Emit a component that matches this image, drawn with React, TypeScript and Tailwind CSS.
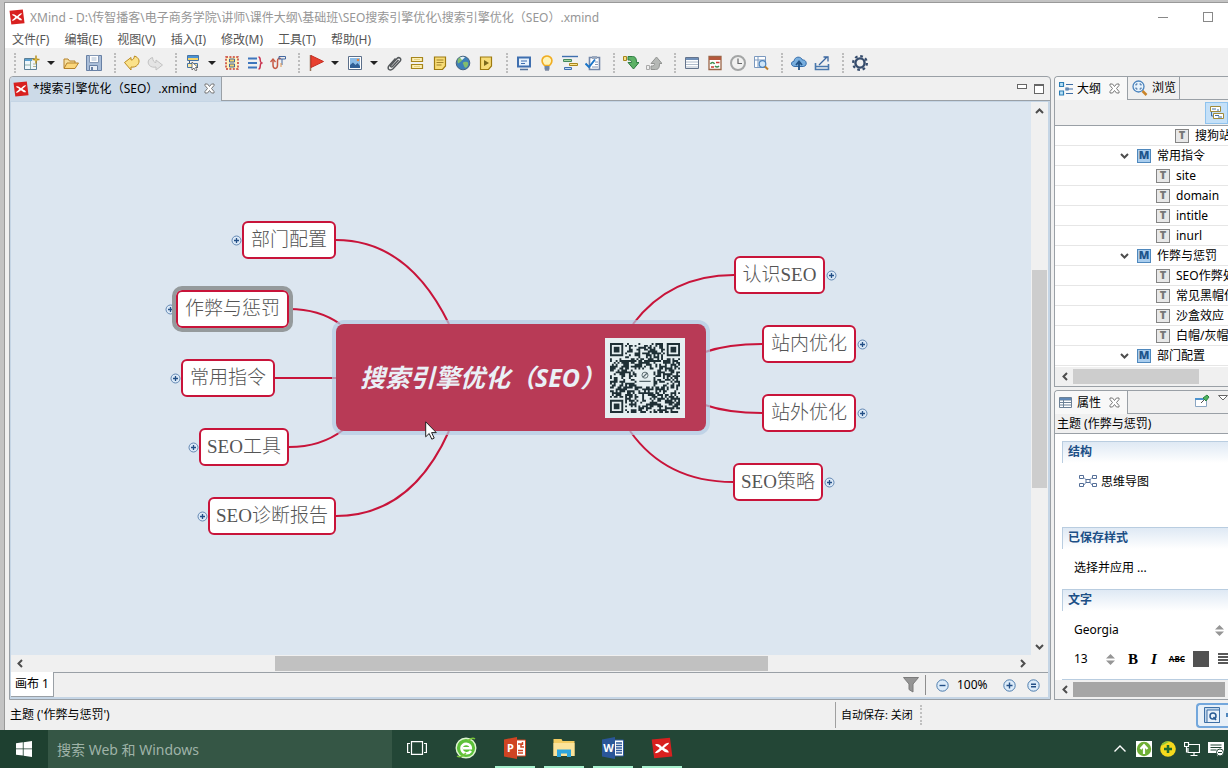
import type { ReactNode } from "react";

const menus = ["文件(F)", "编辑(E)", "视图(V)", "插入(I)", "修改(M)", "工具(T)", "帮助(H)"];

const topics = [
  { text: "部门配置", box: "left-[231px] top-[119px] w-[94px]", plus: "left-[220px] top-[133px]" },
  { text: "作弊与惩罚", box: "left-[165px] top-[188px] w-[113px] outline-4 outline-[#959a9c]", plus: "left-[154px] top-[202px]" },
  { text: "常用指令", box: "left-[170px] top-[257px] w-[94px]", plus: "left-[159px] top-[271px]" },
  { text: "SEO工具", box: "left-[188px] top-[326px] w-[90px]", plus: "left-[177px] top-[340px]" },
  { text: "SEO诊断报告", box: "left-[197px] top-[395px] w-[128px]", plus: "left-[186px] top-[409px]" },
  { text: "认识SEO", box: "left-[723px] top-[154px] w-[91px]", plus: "left-[815px] top-[168px]" },
  { text: "站内优化", box: "left-[751px] top-[223px] w-[94px]", plus: "left-[846px] top-[237px]" },
  { text: "站外优化", box: "left-[751px] top-[292px] w-[94px]", plus: "left-[846px] top-[306px]" },
  { text: "SEO策略", box: "left-[722px] top-[361px] w-[90px]", plus: "left-[813px] top-[375px]" },
];

const links = [
  "M325 138Q397 138 438 222",
  "M278 207Q308 207 329 222",
  "M264 276H326",
  "M278 345Q310 345 332 328",
  "M325 414Q400 414 438 329",
  "M723 173Q659 173 622 222",
  "M751 242Q717 242 694 250",
  "M751 311Q717 311 694 303",
  "M722 380Q655 380 619 329",
];

const outline = [
  { kind: "T", text: "搜狗站长平台", pad: "pl-[117px]" },
  { kind: "M", text: "常用指令", pad: "pl-[63px]" },
  { kind: "T", text: "site", pad: "pl-[98px]" },
  { kind: "T", text: "domain", pad: "pl-[98px]" },
  { kind: "T", text: "intitle", pad: "pl-[98px]" },
  { kind: "T", text: "inurl", pad: "pl-[98px]" },
  { kind: "M", text: "作弊与惩罚", pad: "pl-[63px]" },
  { kind: "T", text: "SEO作弊处罚", pad: "pl-[98px]" },
  { kind: "T", text: "常见黑帽作弊", pad: "pl-[98px]" },
  { kind: "T", text: "沙盒效应", pad: "pl-[98px]" },
  { kind: "T", text: "白帽/灰帽/黑帽", pad: "pl-[98px]" },
  { kind: "M", text: "部门配置", pad: "pl-[63px]" },
];

function Svg({ children, className = "size-4", box = "0 0 16 16" }: { children: ReactNode; className?: string; box?: string }) {
  return (
    <svg viewBox={box} className={`${className} shrink-0`} fill="none" aria-hidden="true">
      {children}
    </svg>
  );
}

// Toolbar drawings, all on a 16x16 grid
const icons: Record<string, ReactNode> = {
  newMap: (
    <>
      <path d="M.5 3.500h12v11H.5z" fill="#eef6fb" stroke="#5b7f95" />
      <path d="M1 4h7v2H1z" fill="#5ba0d0" />
      <path d="M6.500 6v8M1 10h5" stroke="#8fb0a8" />
      <path d="M9 9h3M9 11.500h3" stroke="#b6b48a" />
      <path d="M12 .5v8M8.500 4.500h7" stroke="#b8901c" strokeWidth="1.500" />
      <path d="M10.500 3l3 3m0-3l-3 3" stroke="#e4c34e" />
    </>
  ),
  open: (
    <>
      <path d="M1 13V4h4l1.500 2H12v2" fill="#f6dfa0" stroke="#b5822b" />
      <path d="M1 13.500L4 8h11.500L12 13.500z" fill="#fbd77c" stroke="#b5822b" />
    </>
  ),
  save: (
    <>
      <path d="M.5.500h15v15H.5z" fill="#a9bdd8" stroke="#6881a5" />
      <path d="M3.500.500h9v7h-9z" fill="#fff" stroke="#8498b5" />
      <path d="M5.500 3h5M5.500 5h5" stroke="#a8bad0" />
      <path d="M3.500 10.500h8v5h-8z" fill="#e8eef6" stroke="#6881a5" />
      <path d="M5 12h2v3H5z" fill="#6881a5" />
    </>
  ),
  undo: <path d="M.5 7.500L7 2.500V5c2 0 3-1 3.500-4 4.500 1.500 6 5.500 3 9-1.500 1.700-4 2.500-6.500 2v3z" fill="#fbe28a" stroke="#bb8b20" strokeLinejoin="round" />,
  redo: <path d="M15.500 10L9 5v2.500C7 7.500 6 6 5.500 2.500 1 4 0 7.500 2.500 10.500c1.500 1.500 4 2 6.500 1.500v3z" fill="#e4e4e4" stroke="#c2c2c2" strokeLinejoin="round" />,
  topic: (
    <>
      <path d="M2.500.500h11v5h-11z" fill="#f6d56a" stroke="#4674a6" />
      <path d="M3 1h10v2H3z" fill="#4c92d4" />
      <path d="M4.500 6v3" stroke="#555" />
      <path d="M2.500 8.500h10v4h-10z" fill="#fbe9a5" stroke="#4674a6" />
      <path d="M7 7v8l2-2 1.500 3 1.500-1-1.500-2.500H13z" fill="#fff" stroke="#555" strokeWidth=".8" />
    </>
  ),
  boundary: (
    <>
      <path d="M2 2h12v12H2z" fill="#fff3c0" stroke="#c63b2f" strokeWidth="1.500" strokeDasharray="2 1.400" />
      <path d="M5.500 4h5v3h-5zM5.500 9h5v3h-5z" fill="#f6d56a" stroke="#4468a0" />
    </>
  ),
  summary: (
    <>
      <path d="M1 3.500h9M1 8h9M1 12.500h9" stroke="#3e76bd" strokeWidth="2" />
      <path d="M11.500 2c3 0 .5 5 3 6-2.500 1 0 6-3 6" stroke="#c9324e" strokeWidth="1.500" />
    </>
  ),
  relation: (
    <>
      <path d="M3 5v5c0 4.500 4.500 4.500 4.500 0V6c0-3 2.500-3.500 3-2" stroke="#c65a45" strokeWidth="1.500" />
      <path d="M.5 7l2.500-3 2.500 3" stroke="#c65a45" strokeWidth="1.300" />
      <path d="M9 1.500h6.500v2.500H9zM12 4v6" stroke="#4468a0" />
      <path d="M11 8v4" stroke="#e0954e" />
    </>
  ),
  flag: (
    <>
      <path d="M2.500 0v16" stroke="#97755a" strokeWidth="1.500" />
      <path d="M3 .5l12.500 6L3 12.500z" fill="#e8402f" stroke="#c52d22" />
    </>
  ),
  image: (
    <>
      <path d="M1.500 1.500h13v13h-13z" fill="#fff" stroke="#5b6f8a" />
      <path d="M3 3h10v10H3z" fill="#8bbbe6" />
      <path d="M3 13v-3l3-2.500 2.500 2.500 2-2 2.500 3v2z" fill="#315f96" />
      <circle cx="11" cy="5" r="1.300" fill="#e8843a" />
    </>
  ),
  clip: <path d="M12.500 5L6.500 11.500c-1.200 1.200-2.500 0-1.500-1.200L11 3.500c2-2 5 .2 3.200 2.500L7 13.800c-3 2.800-6.500 0-4-3L9.500 3.500" stroke="#55595c" strokeWidth="1.500" />,
  label: (
    <>
      <path d="M2.500 2.500h11v4h-11zM2.500 9.500h11v4h-11z" fill="#fdf0b5" stroke="#a7861c" strokeWidth="1.200" />
      <path d="M5 4.500h6M5 11.500h6" stroke="#e5d283" />
    </>
  ),
  note: (
    <>
      <path d="M2.500 2h11v9l-3 3.500h-8z" fill="#f7dc77" stroke="#9e7b10" strokeWidth="1.200" />
      <path d="M4.500 5h7M4.500 7.500h7M4.500 10h5" stroke="#a2832a" />
    </>
  ),
  globe: (
    <>
      <circle cx="8" cy="8" r="6.800" fill="#3d7fb8" stroke="#47627e" />
      <path d="M3 4c3-3 6-2 5 0S5 7 4 8 2 7 3 4zM9 7c3-1 5 0 4 3s-3 4-4 1-2-3 0-4z" fill="#83bd6d" />
      <path d="M5 2.500c2-1 4-1 5 0L7 5z" fill="#e4f3fa" />
    </>
  ),
  audio: (
    <>
      <path d="M2.500 2h11v9l-3 3.500h-8z" fill="#f7dc77" stroke="#9e7b10" strokeWidth="1.200" />
      <path d="M6 5l5 3-5 3z" fill="#7c6a1c" />
    </>
  ),
  present: (
    <>
      <path d="M2 2.500h12v9H2z" fill="#e7f2fc" stroke="#3f6faf" strokeWidth="2" />
      <path d="M5 6h6M5 8.500h4" stroke="#3f6faf" />
      <path d="M4 14.500h8" stroke="#56749c" strokeWidth="1.500" />
    </>
  ),
  bulb: (
    <>
      <path d="M5.500 10.500C1 6 3.500 1 8 1s7 5 2.500 9.500z" fill="#fff4b8" stroke="#f0ad22" strokeWidth="1.600" />
      <path d="M5.500 11h5v3.500h-5z" fill="#6f86a6" />
      <path d="M6 15h4" stroke="#45597a" />
    </>
  ),
  gantt: (
    <>
      <path d="M0 1.500h16" stroke="#3f6faf" strokeWidth="1.400" />
      <path d="M1.500 4.500h8v2h-8z" fill="#a5d6a0" stroke="#44885e" />
      <path d="M7.500 8.500h8v2h-8z" fill="#fbe28a" stroke="#a7861c" />
      <path d="M2.500 12.500h7v2h-7z" fill="#bcd7f2" stroke="#3f6faf" />
    </>
  ),
  task: (
    <>
      <path d="M4.500 2.500h10v12h-10z" fill="#fff" stroke="#7286a8" strokeWidth="1.600" />
      <path d="M7 1h5v3H7z" fill="#9aa8bd" />
      <path d="M10 7h3M10 9.500h3M7 12h6" stroke="#8496b5" />
      <path d="M.5 8.500L4 12l6-7.500" stroke="#1c75c8" strokeWidth="2" />
    </>
  ),
  drillIn: (
    <>
      <path d="M.5 1.500h3v4h-3z" fill="#fbe28a" stroke="#a7861c" />
      <path d="M5 1.500h4.500c3 0 4 2 4 6H16L10.500 14 5 7.500h3.500c0-2-.5-2.500-3.500-2.500z" fill="#5cb165" stroke="#2d7c41" />
    </>
  ),
  drillOut: (
    <>
      <path d="M.5 10.500h3v4h-3z" fill="#eee" stroke="#aaa" />
      <path d="M5 14.500h4.500c3 0 4-2 4-6H16L10.500 2 5 8.500h3.500c0 2-.5 2.500-3.500 2.500z" fill="#b5b8b5" stroke="#929492" />
    </>
  ),
  list: (
    <>
      <path d="M1.500 2.500h13v11h-13z" fill="#fff" stroke="#64748c" />
      <path d="M2 4h12" stroke="#6f8fb8" strokeWidth="2" />
      <path d="M2 7h12M2 9.500h12M2 12h12" stroke="#b0bccb" />
    </>
  ),
  theme: (
    <>
      <path d="M2 1.500h12v13H2z" fill="#fff" stroke="#9a6648" strokeWidth="1.300" />
      <path d="M2 2h12v3H2z" fill="#b5583c" />
      <path d="M3.500 9c1-2 3-2 4 0M8 11c2 2 3 1 4 0" stroke="#3d8e50" strokeWidth="1.600" />
      <path d="M9 7.500h3.500M4 12h3" stroke="#c63b2f" strokeWidth="1.600" />
    </>
  ),
  clock: (
    <>
      <circle cx="8" cy="8" r="7" fill="#f1f1f0" stroke="#a3a5a5" strokeWidth="2" />
      <path d="M8 3.500V9M8 8.500h4" stroke="#66686a" strokeWidth="1.200" />
    </>
  ),
  find: (
    <>
      <path d="M1.500 1.500h11v11h-11zM1.500 5h11M5 1.500v11" fill="#fff" stroke="#7b99bf" />
      <circle cx="9.500" cy="9" r="3.300" fill="#cfe6f8" stroke="#4a83bd" strokeWidth="1.200" />
      <path d="M12 11.500l3 3" stroke="#bd7f2c" strokeWidth="2" />
    </>
  ),
  cloud: (
    <>
      <path d="M4 11.500c-4.500 0-4.500-5-1-5.200C3.500 1 10 1 11.500 5c4.500-.5 5 6 1 6.500z" fill="#78aede" stroke="#326ba9" />
      <path d="M8 15V8M5 10l3-3.500 3 3.500" stroke="#235487" strokeWidth="1.800" />
    </>
  ),
  share: (
    <>
      <path d="M1.500 8v6.500h13V9M1.500 11.500h13" stroke="#4a78ad" strokeWidth="1.600" />
      <path d="M5 10l8-8M9.500 2H14v4.500" stroke="#3b67a0" strokeWidth="1.300" />
    </>
  ),
  gear: (
    <>
      <circle cx="8" cy="8" r="4.600" stroke="#364c6c" strokeWidth="2.400" />
      <circle cx="8" cy="8" r="6.900" stroke="#364c6c" strokeWidth="2.200" strokeDasharray="2.700 2.720" />
    </>
  ),
};

const toolbar = [
  ["newMap", "caret", "open", "save"],
  ["undo", "redo"],
  ["topic", "caret", "boundary", "summary", "relation"],
  ["flag", "caret", "image", "caret", "clip", "label", "note", "globe", "audio"],
  ["present", "bulb", "gantt", "task"],
  ["drillIn", "drillOut"],
  ["list", "theme", "clock", "find"],
  ["cloud", "share"],
  ["gear"],
];

function Logo({ className = "size-4" }: { className?: string }) {
  return (
    <Svg className={className}>
      <path d="M.5 1.800L13.800.5l1.700 13.700L2.300 15.500z" fill="#d8201f" />
      <path d="M3 5.500c2-1 3.500.3 5 1.700C9.500 5.800 11 4 13 4.300c.2 1-2.500 2.300-3.500 3.700 1.300 1 3.300 1.500 3.500 3.200-2.500.5-3.500-1-5-2-1.500 1-2.700 2.800-5 2.500C3 10.500 5.500 9.500 6.300 8 5.200 7 3.300 6.800 3 5.500z" fill="#fff" />
    </Svg>
  );
}

// Full-width brackets are centred in their cell only in the TC face
function Seo() {
  return (
    <>
      <span className="font-['Noto_Sans_CJK_TC',sans-serif]">（</span>
      SEO
      <span className="font-['Noto_Sans_CJK_TC',sans-serif]">）</span>
    </>
  );
}

function CloseX() {
  return (
    <Svg className="size-[11px]" box="0 0 11 11">
      <path d="M1 1h2.500l2 2.500L7.500 1H10v1.500L7.500 5.500 10 8.500V10H7.500l-2-2.500L3.500 10H1V8.500l2.500-3L1 2.500z" stroke="#777" fill="#fff" />
    </Svg>
  );
}

function Arrow({ d }: { d: string }) {
  return (
    <Svg className="size-[9px]" box="0 0 9 9">
      <path d={d} stroke="#4d4d4d" strokeWidth="2" />
    </Svg>
  );
}

const LEFT = "M6 1L2.500 4.500 6 8";
const RIGHT = "M3 1l3.500 3.500L3 8";
const UP = "M1 6l3.500-3.500L8 6";
const DOWN = "M1 3l3.500 3.500L8 3";

function Round({ d }: { d: string }) {
  return (
    <Svg className="size-[13px]" box="0 0 13 13">
      <circle cx="6.500" cy="6.500" r="5.700" fill="#dcebf9" stroke="#4d7cad" />
      <path d={d} stroke="#234f86" strokeWidth="1.400" />
    </Svg>
  );
}

// Deterministic module pattern around the three finder squares
const SIZE = 37;
function buildModules() {
  let seed = 20167;
  let d = "";
  for (let y = 0; y < SIZE; y++) {
    for (let x = 0; x < SIZE; x++) {
      seed = (seed * 16807) % 2147483647;
      const inFinder = (x < 8 && y < 8) || (x > 28 && y < 8) || (x < 8 && y > 28);
      const inLogo = x > 13 && x < 23 && y > 13 && y < 23;
      if (!inFinder && !inLogo && seed / 2147483647 > 0.46) d += `M${x} ${y}h1v1h-1z`;
    }
  }
  return d;
}
const modules = buildModules();

function QrCode() {
  return (
    <div className="bg-[#e6eff1] p-[5px]">
      <svg viewBox="0 0 37 37" className="size-[70px]" role="img" aria-label="QR">
        <path d={modules} fill="#1f3036" />
        {["translate(0 0)", "translate(30 0)", "translate(0 30)"].map((t) => (
          <g key={t} transform={t}>
            <path d="M.5.500h6v6h-6z" fill="none" stroke="#1f3036" />
            <path d="M2 2h3v3H2z" fill="#1f3036" />
          </g>
        ))}
        <circle cx="18.500" cy="17" r="1.600" fill="none" stroke="#59696e" strokeWidth=".5" />
        <path d="M17.500 18l2-2M15.500 20.300h6" stroke="#59696e" strokeWidth=".6" />
      </svg>
    </div>
  );
}

function Toolbar() {
  return (
    <div className="flex h-[28px] shrink-0 items-center bg-[#f0f0f0] pt-[2px]">
      {toolbar.map((group, i) => (
        <div key={i} className="flex items-center">
          <div className="flex w-[15px] justify-center pl-1">
            <div className="h-5 border-l-2 border-dotted border-[#bdbdbd]" />
          </div>
          {group.map((name, j) =>
            name === "caret" ? (
              <button key={j} aria-label="more" className="flex w-4 justify-center">
                <Svg className="h-1 w-2" box="0 0 8 4">
                  <path d="M0 0h8L4 4z" fill="#222" />
                </Svg>
              </button>
            ) : (
              <button key={j} aria-label={name} className="flex w-[23px] justify-center">
                <Svg>{icons[name]}</Svg>
              </button>
            ),
          )}
        </div>
      ))}
    </div>
  );
}

function MindMap() {
  return (
    <div className="relative min-w-0 flex-1 overflow-hidden bg-[#dce6f0]">
      <svg className="absolute inset-0 size-full" fill="none" stroke="#c8143a" strokeWidth="2">
        {links.map((d) => (
          <path key={d} d={d} />
        ))}
      </svg>
      <div className="absolute left-[325px] top-[222px] flex h-[107px] w-[370px] items-center rounded-lg bg-[#b83a56] pl-6 ring-4 ring-[#b4cbe2]/70">
        <span className="w-[245px] whitespace-nowrap text-[25px] font-bold italic text-[#eaf0f6]">
          搜索引擎优化
          <Seo />
        </span>
        <QrCode />
      </div>
      {topics.map((t) => (
        <div key={t.text}>
          <button aria-label="expand" className={`absolute ${t.plus}`}>
            <Svg className="size-[11px]" box="0 0 11 11">
              <circle cx="5.500" cy="5.500" r="4.500" fill="#dbe9f7" stroke="#6388b3" />
              <path d="M3 5.500h5M5.500 3v5" stroke="#234f86" strokeWidth="1.300" />
            </Svg>
          </button>
          <div
            className={`absolute flex h-[38px] items-center justify-center whitespace-nowrap rounded-md border-2 border-[#c8143a] bg-white font-['Liberation_Serif','Noto_Sans_CJK_SC',serif] text-[19px] font-light text-[#555] ${t.box}`}
          >
            {t.text}
          </div>
        </div>
      ))}
      <svg viewBox="0 0 12 19" className="absolute left-[414px] top-[319px] h-[19px] w-3">
        <path d="M.7.800v15l3.500-3.300 2.600 5.700 2.400-1.100-2.600-5.500h4.700z" fill="#fff" stroke="#222" />
      </svg>
    </div>
  );
}

function Editor() {
  return (
    <section className="flex min-w-0 flex-1 flex-col rounded-t border border-[#9aa0a6] bg-[#f0f0f0]">
      <div className="flex h-6 shrink-0 items-center border-b border-[#9aa0a6]">
        <div className="flex h-6 items-center gap-1 rounded-tl border-r border-[#9aa0a6] bg-[#ccdae8] pl-[3px] pr-[6px]">
          <Logo />
          <span className="whitespace-nowrap">
            *搜索引擎优化
            <Seo />
            .xmind
          </span>
          <button aria-label="关闭" className="ml-[3px]">
            <CloseX />
          </button>
        </div>
        <div className="ml-auto flex gap-[7px] pr-[6px]">
          <button aria-label="最小化" className="h-[5px] w-[10px] border border-[#666] bg-white" />
          <button aria-label="最大化" className="h-[10px] w-[10px] border border-t-2 border-[#666] bg-white" />
        </div>
      </div>
      <div className="flex min-h-0 flex-1 flex-col border-2 border-l border-t border-[#c5d5e5]">
        <div className="flex min-h-0 flex-1">
          <MindMap />
          <div className="flex w-[17px] flex-col items-center bg-[#f0f0f0]">
            <div className="flex h-[18px] items-center"><Arrow d={UP} /></div>
            <div className="flex-[150]" />
            <div className="w-[15px] flex-[218] bg-[#cdcdcd]" />
            <div className="flex-[149]" />
            <div className="flex h-[18px] items-center"><Arrow d={DOWN} /></div>
          </div>
        </div>
        <div className="flex h-[17px] shrink-0 items-center bg-[#f0f0f0] pr-[17px]">
          <div className="flex w-[18px] justify-center"><Arrow d={LEFT} /></div>
          <div className="flex-[246]" />
          <div className="h-[15px] flex-[493] bg-[#c1c1c1]" />
          <div className="flex-[245]" />
          <div className="flex w-[18px] justify-center"><Arrow d={RIGHT} /></div>
        </div>
        <div className="flex h-[25px] shrink-0 items-center bg-[#f0f0f0]">
          <button className="h-full whitespace-nowrap border-b border-r border-[#9aa0a6] bg-white px-1 text-[12px]">画布 1</button>
          <div className="flex h-full flex-1 items-center justify-end border-t border-[#9aa0a6] pr-2">
            <button aria-label="筛选" className="mr-[6px]">
              <Svg>
                <path d="M.5.500h15L10 7v8l-4-2.500V7z" fill="#959595" stroke="#7b7b7b" />
              </Svg>
            </button>
            <div className="mr-[10px] h-5 border-l border-[#8e8e8e]" />
            <button aria-label="缩小"><Round d="M3.500 6.500h6" /></button>
            <span className="w-[54px] pl-2">100%</span>
            <button aria-label="放大" className="mr-[11px]"><Round d="M3.500 6.500h6M6.500 3.500v6" /></button>
            <button aria-label="适应"><Round d="M4 5.300h5M4 7.800h5" /></button>
          </div>
        </div>
      </div>
    </section>
  );
}

function Outline() {
  return (
    <section className="flex flex-[311] flex-col overflow-hidden rounded-tl border border-r-0 border-[#9aa0a6] bg-[#f0f0f0]">
      <div className="flex h-[23px] shrink-0">
        <div className="flex w-[73px] items-center gap-1 border-r border-[#9aa0a6] bg-[#f8f8f8] pl-1">
          <Svg className="size-[14px]" box="0 0 14 14">
            <path d="M.5.500h4v4h-4zM.5 9h4v4h-4z" fill="#b9e1f7" stroke="#2b7db5" strokeWidth="1.200" />
            <path d="M7 2.500h7M9.500 7H14M7 11.500h7M7 6h2v2H7z" stroke="#3e6ea5" strokeWidth="1.200" />
          </Svg>
          <span>大纲</span>
          <button aria-label="关闭" className="ml-1"><CloseX /></button>
        </div>
        <button className="flex w-[52px] items-center gap-1 whitespace-nowrap border-b border-r border-[#9aa0a6] pl-1">
          <Svg>
            <circle cx="6.500" cy="6.500" r="5.500" fill="#e7f3fc" stroke="#4a83bd" strokeWidth="1.300" />
            <path d="M4 5.500V4h1.500M7.500 4H9v1.500M9 7.500V9H7.500M5.500 9H4V7.500" stroke="#35659e" />
            <path d="M10.500 11l4 4" stroke="#c98328" strokeWidth="2.500" />
          </Svg>
          浏览
        </button>
        <div className="flex-1 border-b border-[#9aa0a6]" />
      </div>
      <div className="flex h-[26px] shrink-0 items-center justify-end border-b border-[#9aa0a6]">
        <button aria-label="显示" className="flex h-[22px] w-[23px] items-center justify-center border border-[#8fc3ee] bg-[#c4e0f8]">
          <Svg>
            <path d="M1.500 1.500h10v5h-10zM4.500 8.500h10v5h-10z" fill="#fff" stroke="#a08a3a" />
            <path d="M3 4h4M8 5h2M6 10.500h4M9 12h4" stroke="#3e6ea5" />
            <path d="M2.500 7v4H4" stroke="#3e6ea5" />
          </Svg>
        </button>
      </div>
      <ul className="min-h-0 flex-1 overflow-hidden bg-white">
        {outline.map((row) => (
          <li key={row.kind + row.text} className={`flex h-5 items-center gap-[6px] whitespace-nowrap border-b border-[#e6e6e6] ${row.pad}`}>
            {row.kind === "M" && (
              <button aria-label="折叠" className="mr-px flex w-3 justify-center"><Arrow d={DOWN} /></button>
            )}
            {row.kind === "M" ? (
              <span className="flex size-[14px] shrink-0 items-center justify-center border border-[#4f88bd] bg-[#a9cdee] text-[11px] font-black text-[#1e548c]">M</span>
            ) : (
              <span className="ml-[3px] flex size-[14px] shrink-0 items-center justify-center border border-[#858585] bg-[#e8e8e8] text-[11px] font-black text-[#777]">T</span>
            )}
            <span>{row.text}</span>
          </li>
        ))}
      </ul>
      <div className="flex h-[19px] shrink-0 items-center gap-[2px] pl-1">
        <div className="flex w-3 justify-center"><Arrow d={LEFT} /></div>
        <div className="h-[15px] w-[126px] bg-[#cdcdcd]" />
      </div>
    </section>
  );
}

function SectionTitle({ children }: { children: ReactNode }) {
  return (
    <h2 className="ml-[7px] h-[22px] border-l border-t border-[#b9cde0] bg-linear-to-b from-[#dfe9f4] to-white pl-[5px] text-[12px] font-bold leading-5 text-[#1c4f86]">
      {children}
    </h2>
  );
}

function UpDown() {
  return (
    <Svg className="h-[11px] w-[9px]" box="0 0 9 11">
      <path d="M0 4.500L4.500 0 9 4.500zM0 6.500h9L4.500 11z" fill="#969696" />
    </Svg>
  );
}

function Properties() {
  return (
    <section className="flex flex-[310] flex-col overflow-hidden rounded-tl border border-r-0 border-[#9aa0a6] bg-[#f0f0f0]">
      <div className="flex h-[23px] shrink-0">
        <div className="flex w-[73px] items-center gap-[5px] border-r border-[#9aa0a6] bg-[#f8f8f8] pl-1">
          <Svg className="size-[13px]" box="0 0 13 13">
            <path d="M.5 1.500h12v10H.5zM.5 4h12M.5 6.500h12M.5 9h12M4.500 4v7.500" fill="#fff" stroke="#6c8196" />
            <path d="M1 2h11v2H1z" fill="#5f87b5" />
          </Svg>
          <span>属性</span>
          <button aria-label="关闭" className="ml-[3px]"><CloseX /></button>
        </div>
        <div className="flex flex-1 justify-end border-b border-[#9aa0a6]">
          <button aria-label="固定" className="mr-[8px]">
            <Svg>
              <path d="M1.500 4.500h11v8h-11z" fill="#fff" stroke="#8ba6c2" />
              <path d="M1 4h12v2H1z" fill="#4d94cf" />
              <path d="M7 9l3-3" stroke="#555" />
              <path d="M9 4l4-3 2 2-3 4z" fill="#4db35f" stroke="#2c8441" />
            </Svg>
          </button>
          <Svg className="mt-1 h-[6px] w-[10px]" box="0 0 10 6">
            <path d="M.5.500h9L5 5z" fill="#fff" stroke="#666" />
          </Svg>
        </div>
      </div>
      <div className="h-5 shrink-0 whitespace-nowrap border-b border-[#9aa0a6] pl-[2px] leading-5">主题 (作弊与惩罚)</div>
      <div className="min-h-0 flex-1 overflow-hidden bg-white pt-[7px]">
        <SectionTitle>结构</SectionTitle>
        <button className="flex h-[64px] items-start gap-1 whitespace-nowrap pl-6 pt-[10px] leading-[18px]">
          <Svg className="h-4 w-[18px]" box="0 0 18 16">
            <path d="M5 4.500l3 3.500-3 4M13 4.500L10 8l3 4" stroke="#7790b5" />
            <path d="M.5 2.500h4v3h-4zM.5 10.500h4v3h-4zM13.500 2.500h4v3h-4zM13.500 10.500h4v3h-4zM7 6.500h4v3H7z" fill="#fff" stroke="#556f98" />
          </Svg>
          思维导图
        </button>
        <SectionTitle>已保存样式</SectionTitle>
        <button className="flex h-10 items-start whitespace-nowrap pl-[19px] pt-[10px] leading-[18px]">选择并应用 ...</button>
        <SectionTitle>文字</SectionTitle>
        <div className="flex h-[38px] items-center justify-between pl-[19px] pr-1">
          <select aria-label="字体" className="w-[120px] appearance-none bg-transparent">
            <option>Georgia</option>
          </select>
          <UpDown />
        </div>
        <div className="flex h-5 items-center whitespace-nowrap pl-[19px]">
          <select aria-label="字号" className="w-8 shrink-0 appearance-none bg-transparent">
            <option>13</option>
          </select>
          <UpDown />
          <button className="ml-[13px] font-['Liberation_Serif',serif] text-[15px] font-black">B</button>
          <button className="ml-[13px] font-['Liberation_Serif',serif] text-[15px] font-bold italic">I</button>
          <button className="ml-[12px] text-[8px] font-bold line-through">ABC</button>
          <button aria-label="颜色" className="ml-[8px] size-4 shrink-0 bg-[#525252]" />
          <button aria-label="对齐" className="ml-[9px]">
            <Svg className="size-3" box="0 0 12 12">
              <path d="M0 1h12M0 4h12M0 7h12M0 10h12" stroke="#222" strokeWidth="1.500" />
            </Svg>
          </button>
        </div>
        <div className="ml-[7px] mt-[10px] border-t border-[#b9cde0]" />
      </div>
      <div className="flex h-[19px] shrink-0 items-center gap-[2px] pl-1 pr-[3px]">
        <div className="flex w-3 justify-center"><Arrow d={LEFT} /></div>
        <div className="h-[15px] flex-1 bg-[#a6a6a6]" />
      </div>
    </section>
  );
}

function StatusBar() {
  return (
    <footer className="flex h-[30px] shrink-0 items-center whitespace-nowrap bg-[#f0f0f0] pl-[5px]">
      <span className="flex-1">主题 ('作弊与惩罚')</span>
      <div className="h-[26px] border-l border-[#a0a0a0]" />
      <span className="w-[84px] pl-[5px] text-[11px]">自动保存: 关闭</span>
      <div className="h-5 w-[276px] border-l-2 border-dotted border-[#c0c0c0]" />
      <button aria-label="Q" className="flex h-[25px] w-8 items-center gap-[6px] overflow-hidden rounded-l border-2 border-r-0 border-[#73a7dc] bg-[#e8f0f8] pl-[6px]">
        <Svg>
          <path d="M.5.500h15v15H.5z" fill="#c2d7ec" stroke="#3d6fa5" />
          <path d="M3 3h12.500v12.500H3z" fill="#e8f1fa" stroke="#3d6fa5" />
          <circle cx="9" cy="9" r="3" stroke="#285a94" strokeWidth="1.500" />
          <path d="M9.500 10l2.500 3" stroke="#285a94" strokeWidth="1.500" />
        </Svg>
        <span className="h-1 w-2 shrink-0 bg-[#4f86bd]" />
      </button>
    </footer>
  );
}

function OfficeIcon({ letter, color, mark }: { letter: string; color: string; mark: string }) {
  return (
    <svg viewBox="0 0 22 22" className="size-[22px]">
      <path d="M12 3h9.500v16H12z" fill="#fff" stroke={color} />
      <path d={mark} fill="none" stroke={color} strokeWidth="1.500" />
      <path d="M0 2.500L13 0v22L0 19.500z" fill={color} />
      <text x="6.500" y="15" textAnchor="middle" fontSize="11" fontWeight="700" fill="#fff">
        {letter}
      </text>
    </svg>
  );
}

const apps = [
  {
    name: "任务视图",
    running: false,
    icon: (
      <svg viewBox="0 0 20 14" className="h-[14px] w-5" fill="none" stroke="#fff" strokeWidth="1.200">
        <path d="M4.500.600h11v12.800h-11zM3 2.500H.6v9H3M17 2.500h2.400v9H17" />
      </svg>
    ),
  },
  {
    name: "浏览器",
    running: false,
    icon: (
      <svg viewBox="0 0 22 22" className="size-[22px]" fill="none">
        <circle cx="11" cy="11" r="9.800" fill="#5cc13a" stroke="#dff5d2" strokeWidth="1.400" />
        <path d="M16 14c-3 4-9.500 2.500-9.500-3S16 5.500 15.800 11.300H8" stroke="#fff" strokeWidth="2.600" />
        <path d="M2 19c3 2 7-1 9-3M20 2c-2-1.500-5 0-7 1.500" stroke="#78c63b" strokeWidth="1.500" />
      </svg>
    ),
  },
  { name: "PowerPoint", running: true, icon: <OfficeIcon letter="P" color="#d04423" mark="M14 7h3v3h3M14 13.500h5M14 16h5M18.500 5v3" /> },
  {
    name: "资源管理器",
    running: true,
    icon: (
      <svg viewBox="0 0 22 20" className="h-5 w-[22px]">
        <path d="M.5 1h8l1 2h12v15H.5z" fill="#f3cc62" />
        <path d="M.5 5h21v13H.5z" fill="#fbe39a" />
        <path d="M4 19v-7.500h14V19h-4v-3.500H8V19z" fill="#2ea6de" />
      </svg>
    ),
  },
  { name: "Word", running: true, icon: <OfficeIcon letter="W" color="#2a5699" mark="M14 6h6M14 8.500h6M14 11h6M14 13.500h6M14 16h6" /> },
  { name: "XMind", running: true, icon: <Logo className="size-[22px]" /> },
];

function Taskbar() {
  return (
    <nav className="flex h-[38px] shrink-0 items-stretch bg-[#234636] text-white">
      <button aria-label="开始" className="flex w-12 items-center justify-center bg-[#1e4030]">
        <Svg>
          <path d="M0 2.300l6.800-1v6.200H0zM7.600 1.200L16 0v7.500H7.600zM0 8.300h6.800v6.300L0 13.700zM7.600 8.300H16V16l-8.400-1.200z" fill="#fff" />
        </Svg>
      </button>
      <input aria-label="搜索" placeholder="搜索 Web 和 Windows" className="w-[344px] bg-[#355645] px-[9px] text-[14px] placeholder:text-[#9fb3a8]" />
      <div className="flex">
        {apps.map((a) => (
          <button key={a.name} aria-label={a.name} className="flex w-[49px] flex-col items-center">
            <span className="flex flex-1 items-center">{a.icon}</span>
            <span className={a.running ? "h-[2px] w-10 bg-[#a6f0cd]" : "h-[2px]"} />
          </button>
        ))}
      </div>
      <div className="ml-auto flex items-center gap-2 pr-1">
        <Svg>
          <path d="M2.500 10.500L8 5l5.500 5.500" stroke="#fff" strokeWidth="1.400" />
        </Svg>
        <Svg>
          <path d="M0 0h16v16H0z" fill="#fff" />
          <circle cx="8" cy="8" r="7.200" fill="#6faf35" />
          <path d="M8 13V5M4.500 8L8 4.200 11.500 8" stroke="#fff" strokeWidth="2.200" />
        </Svg>
        <Svg>
          <circle cx="8" cy="8" r="7.800" fill="#f6d91d" />
          <path d="M1 5a7.800 7.800 0 0 1 9-4.500C7 2 5 3 1 5z" fill="#8bc53f" />
          <path d="M8 4v8M4 8h8" stroke="#1f6a2e" strokeWidth="2.500" />
        </Svg>
        <Svg>
          <path d="M5 3.500h10.500v8H4V7M10 11.500v3M6.500 14.500h7M.5 1.500h4v4h-4zM2.500 5.500v6" stroke="#fff" strokeWidth="1.200" />
        </Svg>
        <Svg>
          <path d="M0 1h16v11h-4l-3 3.500V12H0z" fill="#fff" />
          <path d="M2.500 4h11M2.500 6.500h11M2.500 9h6" stroke="#234636" strokeWidth="1.200" />
          <circle cx="12" cy="11.500" r="3.500" fill="#fff" stroke="#234636" />
          <path d="M10 11.500h4" stroke="#234636" />
        </Svg>
      </div>
    </nav>
  );
}

export default function App() {
  return (
    <div className="flex h-screen flex-col overflow-hidden bg-[#c3c3c3] font-['Noto_Sans','Noto_Sans_CJK_SC',sans-serif] text-[12px] text-black">
      <main className="ml-1 mt-[2px] flex min-h-0 flex-1 flex-col border-l border-t border-[#999] bg-[#f0f0f0]">
        <header className="shrink-0 bg-white">
          <div className="flex h-[26px] items-center gap-[5px] pl-1 pt-[2px] text-[#969696]">
            <Logo />
            <h1 className="flex-1 whitespace-nowrap">
              XMind - D:\传智播客\电子商务学院\讲师\课件大纲\基础班\SEO搜索引擎优化\搜索引擎优化
              <Seo />
              .xmind
            </h1>
            <button aria-label="最小化窗口" className="h-px w-[10px] bg-[#888]" />
            <button aria-label="最大化窗口" className="ml-[30px] mr-[15px] h-[10px] w-[10px] border border-[#888]" />
          </div>
          <div className="flex h-[19px] items-center gap-[15px] pl-[7px] pt-[2px] text-[#555]">
            {menus.map((m) => (
              <button key={m}>{m}</button>
            ))}
          </div>
        </header>
        <Toolbar />
        <div className="flex min-h-0 flex-1 gap-[3px] pl-1">
          <Editor />
          <aside className="flex w-[174px] shrink-0 flex-col gap-[3px]">
            <Outline />
            <Properties />
          </aside>
        </div>
        <StatusBar />
      </main>
      <Taskbar />
    </div>
  );
}
